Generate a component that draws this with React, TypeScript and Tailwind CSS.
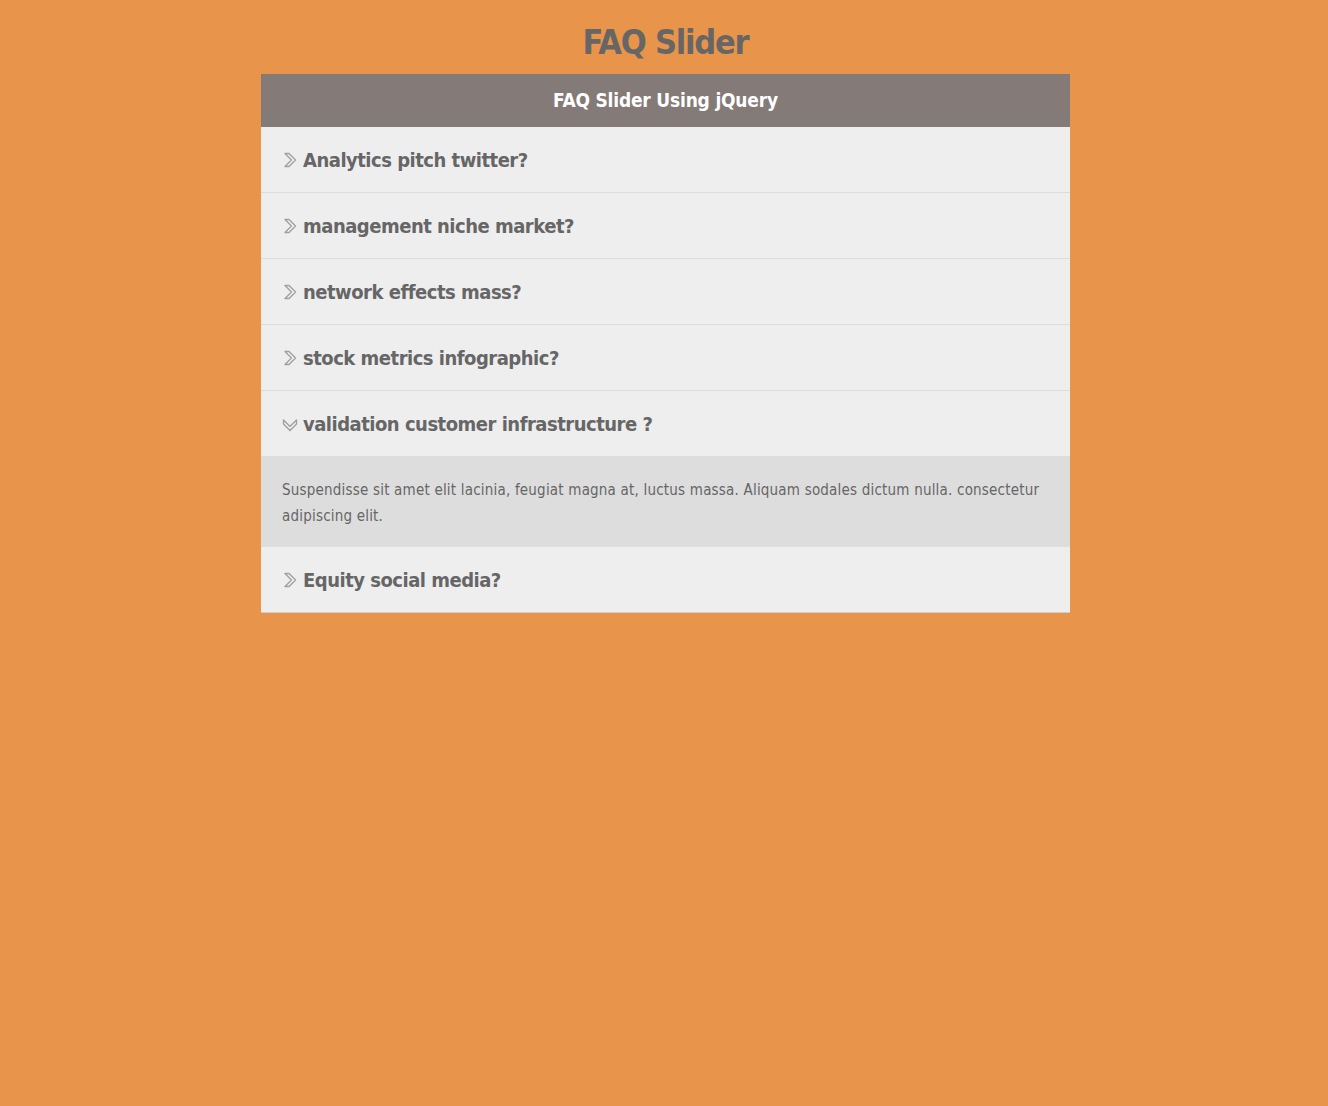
const FAQS = [
  { q: "Analytics pitch twitter?" },
  { q: "management niche market?" },
  { q: "network effects mass?" },
  { q: "stock metrics infographic?" },
  {
    q: "validation customer infrastructure ?",
    a: "Suspendisse sit amet elit lacinia, feugiat magna at, luctus massa. Aliquam sodales dictum nulla. consectetur adipiscing elit.",
  },
  { q: "Equity social media?" },
];

const FONT = { fontFamily: '"DejaVu Sans Condensed", "DejaVu Sans", Verdana, sans-serif' };

function Chevron({ open }: { open?: boolean }) {
  return (
    <svg width="16" height="16" viewBox="0 0 16 16" className="shrink-0">
      <polygon
        points="3,1.5 7,1.5 13.5,8 7,14.5 3,14.5 9.5,8"
        fill="#f2f2f2"
        stroke="#a0a0a0"
        strokeWidth="1.4"
        strokeLinejoin="round"
        transform={open ? "rotate(90 8 8) translate(1 0)" : undefined}
      />
    </svg>
  );
}

export default function App() {
  return (
    <div className="min-h-[1106px] bg-[#e8944a] pt-[20px]" style={FONT}>
      <h1 className="pl-[3px] text-center text-[34px] font-bold leading-[44px] tracking-[-1.2px] text-[#666]">
        FAQ Slider
      </h1>
      <div className="ml-[261px] mt-[10px] w-[809px]">
        <div className="flex h-[53px] items-center justify-center bg-[#847a78] text-[19px] font-bold tracking-[-0.2px] text-white">
          FAQ Slider Using jQuery
        </div>
        {FAQS.map((item, i) => (
          <div key={i}>
            <div
              className={`flex h-[66px] items-center gap-[5px] border-b bg-[#eeeeee] pl-[21px] ${
                i === FAQS.length - 1 ? "border-[#cccccc]" : "border-[#dddddd]"
              }`}
            >
              <Chevron open={!!item.a} />
              <span className="text-[20px] font-bold tracking-[-0.5px] text-[#666]">{item.q}</span>
            </div>
            {item.a && (
              <div className="bg-[#dddddd] px-[21px] pb-[18px] pt-[20px] text-[15px] leading-[26px] tracking-[0.2px] text-[#666]">
                {item.a}
              </div>
            )}
          </div>
        ))}
      </div>
    </div>
  );
}
